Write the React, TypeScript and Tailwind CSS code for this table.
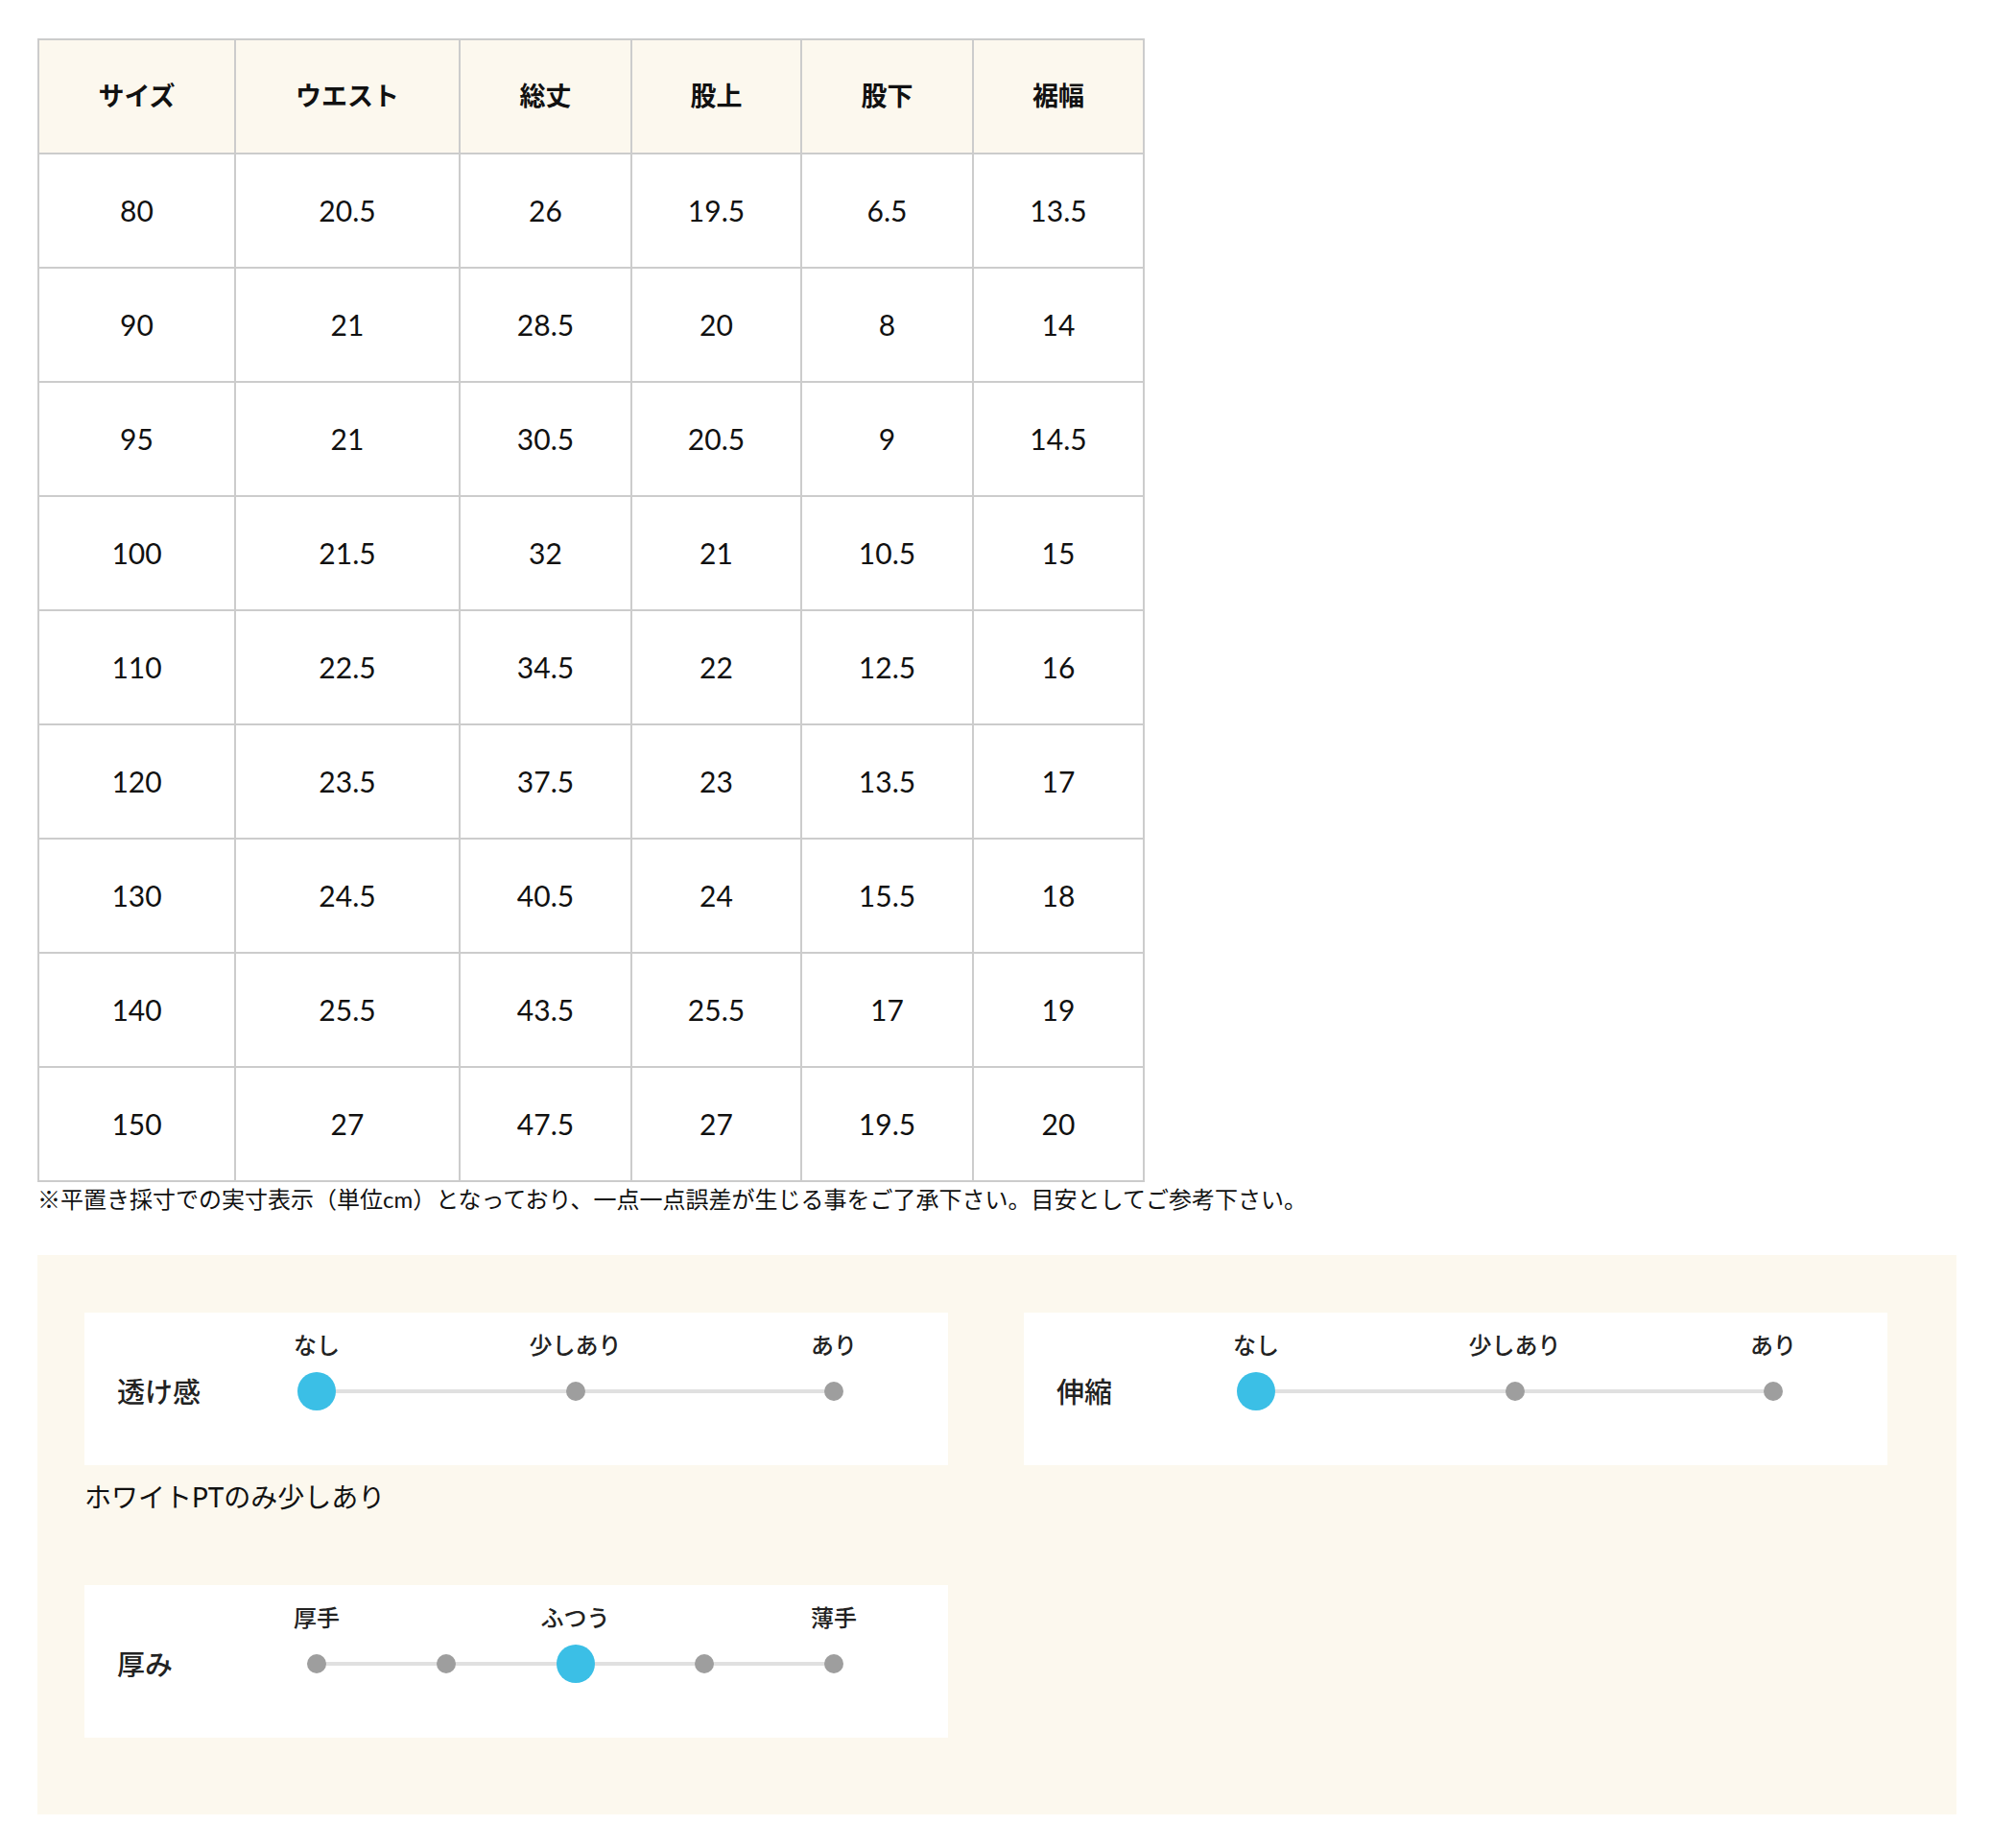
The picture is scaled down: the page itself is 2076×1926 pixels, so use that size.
import React from "react";

const font = "font-['Lato','Noto_Sans_CJK_JP',sans-serif]";

const headers = ["サイズ", "ウエスト", "総丈", "股上", "股下", "裾幅"];

const rows = [
  ["80", "20.5", "26", "19.5", "6.5", "13.5"],
  ["90", "21", "28.5", "20", "8", "14"],
  ["95", "21", "30.5", "20.5", "9", "14.5"],
  ["100", "21.5", "32", "21", "10.5", "15"],
  ["110", "22.5", "34.5", "22", "12.5", "16"],
  ["120", "23.5", "37.5", "23", "13.5", "17"],
  ["130", "24.5", "40.5", "24", "15.5", "18"],
  ["140", "25.5", "43.5", "25.5", "17", "19"],
  ["150", "27", "47.5", "27", "19.5", "20"],
];

type ScaleProps = {
  title: string;
  labels: string[];
  steps: number;
  active: number;
};

const ScaleCard = ({ title, labels, steps, active }: ScaleProps) => {
  return (
    <div className="w-[900px] h-[159px] bg-white pl-[34px] pt-[19px] grid grid-cols-[188px_579px] grid-rows-[30px_40px] gap-y-[13px]">
      <div />
      <div className="flex justify-between">
        {labels.map((l) => (
          <div key={l} className="w-10 flex justify-center">
            <span className="whitespace-nowrap text-[24px] leading-[30px] font-medium text-[#222]">
              {l}
            </span>
          </div>
        ))}
      </div>
      <div className="flex items-center text-[29px] font-medium text-[#222] leading-none">
        {title}
      </div>
      <div className="relative flex justify-between items-center">
        <div className="absolute left-5 right-5 top-[18px] h-[4px] bg-[#e0e0e0]" />
        {Array.from({ length: steps }).map((_, i) => (
          <div key={i} className="relative w-10 h-10 flex items-center justify-center">
            {i === active ? (
              <div className="w-10 h-10 rounded-full bg-[#3bbfe6]" />
            ) : (
              <div className="w-5 h-5 rounded-full bg-[#9e9e9e]" />
            )}
          </div>
        ))}
      </div>
    </div>
  );
};

const App = () => {
  return (
    <div className={`${font} bg-white min-h-[1926px] pl-[39px] pt-[40px] text-[#111]`}>
      <table className="table-fixed border-collapse w-[1154px] text-[27px]">
        <colgroup>
          <col className="w-[205px]" />
          <col className="w-[234px]" />
          <col className="w-[179px]" />
          <col className="w-[177px]" />
          <col className="w-[179px]" />
          <col className="w-[178px]" />
        </colgroup>
        <thead>
          <tr className="h-[119px] bg-[#fcf8ee]">
            {headers.map((h) => (
              <th key={h} className="border-2 border-[#cccccc] font-bold text-center">
                {h}
              </th>
            ))}
          </tr>
        </thead>
        <tbody>
          {rows.map((r) => (
            <tr key={r[0]} className="h-[119px]">
              {r.map((c, i) => (
                <td key={i} className="border-2 border-[#cccccc] text-center text-[30px]">
                  {c}
                </td>
              ))}
            </tr>
          ))}
        </tbody>
      </table>
      <p className="text-[24px] leading-[36px] text-[#111] whitespace-nowrap">
        ※平置き採寸での実寸表示（単位cm）となっており、一点一点誤差が生じる事をご了承下さい。目安としてご参考下さい。
      </p>

      <div className="mt-[40px] w-[2000px] bg-[#fcf8ee] pt-[60px] pl-[49px] pb-[80px]">
        <div className="flex gap-[79px]">
          <ScaleCard title="透け感" labels={["なし", "少しあり", "あり"]} steps={3} active={0} />
          <ScaleCard title="伸縮" labels={["なし", "少しあり", "あり"]} steps={3} active={0} />
        </div>
        <p className="mt-[15px] text-[28px] leading-[36px] text-[#111]">ホワイトPTのみ少しあり</p>
        <div className="mt-[74px]">
          <ScaleCard title="厚み" labels={["厚手", "ふつう", "薄手"]} steps={5} active={2} />
        </div>
      </div>
    </div>
  );
};

export default App;
